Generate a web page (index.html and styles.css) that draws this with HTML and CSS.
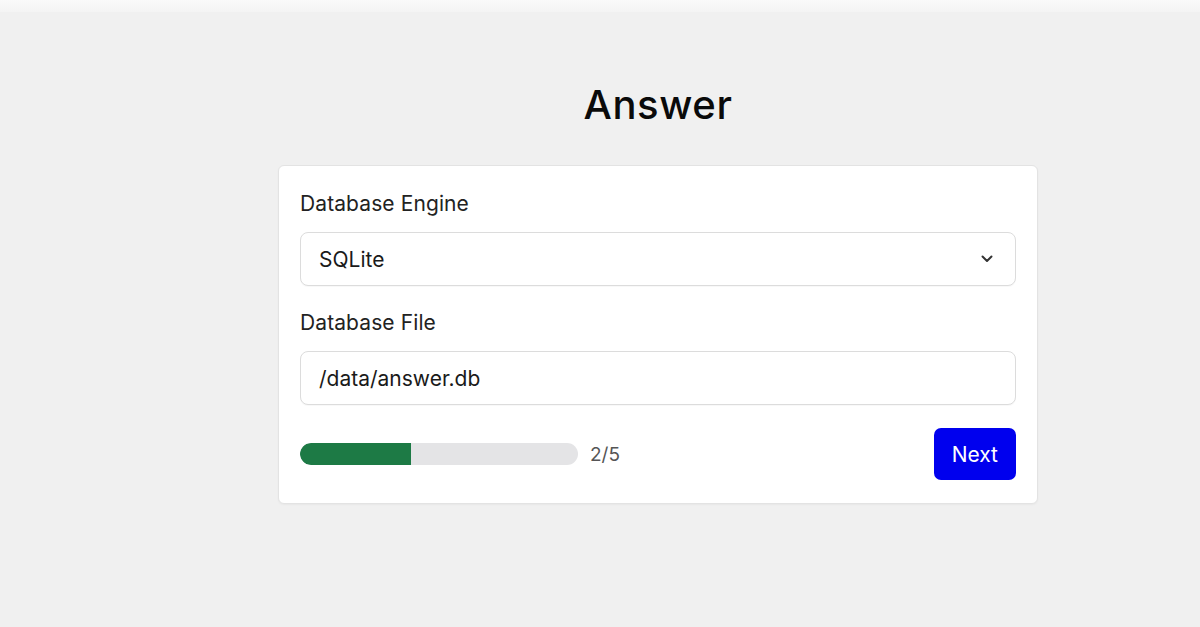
FILE: index.html
```html
<!DOCTYPE html>
<html lang="en">
<head>
<meta charset="utf-8">
<title>Answer</title>
<link rel="stylesheet" href="styles.css">
</head>
<body>
<div class="topbar"></div>
<main class="page">
  <h1 class="title">Answer</h1>
  <form class="card">
    <div class="field">
      <label class="label">Database Engine</label>
      <div class="select">
        <span class="select-value">SQLite</span>
        <svg class="chevron" viewBox="0 0 12 8" width="12" height="8"><path d="M1.5 1.5 L6 6 L10.5 1.5" fill="none" stroke="#333" stroke-width="2" stroke-linecap="round" stroke-linejoin="round"/></svg>
      </div>
    </div>
    <div class="field">
      <label class="label">Database File</label>
      <div class="input">/data/answer.db</div>
    </div>
    <div class="footer">
      <div class="progress">
        <div class="track"><div class="fill" style="width:40%"></div></div>
        <span class="step">2/5</span>
      </div>
      <button type="button" class="next">Next</button>
    </div>
  </form>
</main>
</body>
</html>
```

FILE: styles.css
```css
* { box-sizing: border-box; }
html, body { margin: 0; padding: 0; }
body {
  background: #f0f0f0;
  font-family: Inter, "Noto Sans", "Liberation Sans", sans-serif;
  color: #1c1c1c;
  height: 627px;
  overflow: hidden;
}
.topbar {
  height: 12px;
  background: linear-gradient(#fafafa, #f4f4f4);
}
.page {
  padding-left: 116px;
  display: flex;
  flex-direction: column;
  align-items: center;
}
.title {
  margin: 69px 0 0;
  font-size: 40px;
  line-height: 48px;
  font-weight: 500;
  color: #0a0a0a;
  letter-spacing: 0.6px;
}
.card {
  margin-top: 36px;
  width: 760px;
  background: #fff;
  border: 1px solid #e3e3e3;
  border-radius: 6px;
  box-shadow: 0 1px 2px rgba(0,0,0,0.04);
  padding: 23px 21px 23px;
  display: flex;
  flex-direction: column;
  gap: 22px;
}
.field {
  display: flex;
  flex-direction: column;
  gap: 13px;
}
.label {
  font-size: 21px;
  line-height: 30px;
  color: #222;
  letter-spacing: 0.1px;
}
.select, .input {
  height: 54px;
  border: 1px solid #dcdcdc;
  border-radius: 8px;
  background: #fff;
  display: flex;
  align-items: center;
  padding: 0 18px;
  font-size: 21px;
  color: #1a1a1a;
  box-shadow: 0 1px 1px rgba(0,0,0,0.03);
}
.select { justify-content: space-between; padding-right: 22px; }
.chevron { display: block; }
.footer {
  display: flex;
  align-items: center;
  justify-content: space-between;
  padding-top: 1px;
}
.progress {
  display: flex;
  align-items: center;
  gap: 12px;
}
.track {
  width: 278px;
  height: 22px;
  border-radius: 11px;
  background: #e4e4e6;
  overflow: hidden;
}
.fill {
  height: 100%;
  background: #1d7a45;
  border-radius: 11px 0 0 11px;
}
.step {
  font-size: 19px;
  color: #555;
}
.next {
  height: 52px;
  padding: 0 18px;
  border: none;
  border-radius: 7px;
  background: #0000ee;
  color: #fff;
  font-family: inherit;
  font-size: 21px;
  cursor: pointer;
}
```
